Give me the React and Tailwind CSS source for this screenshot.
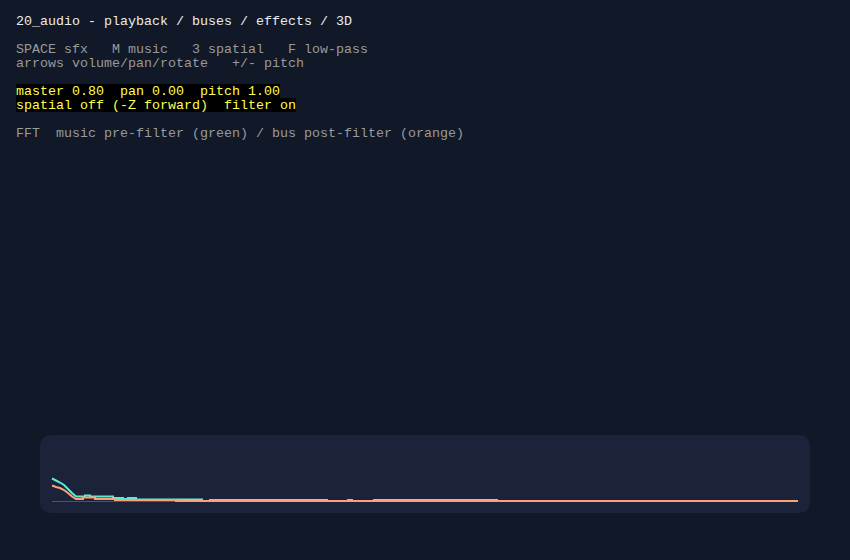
import React from 'react';

const green = [
  [52, 478.5], [56, 480.5], [60, 482.5], [64, 485], [68, 489], [72, 493], [76, 496.5],
  [85, 496.5], [85, 495.5], [90, 495.5], [90, 496.5], [113, 496.5], [113, 498], [123, 498],
  [123, 499], [128, 499], [128, 498], [136, 498], [136, 499.5], [203, 499.5],
];

const greenSegs = [
  [209, 328], [347, 353], [373, 498],
];

const orange = [
  [52, 485.5], [56, 487], [60, 488], [64, 490], [68, 493], [72, 496.5], [76, 499],
  [83, 499], [83, 497.5], [95, 497.5], [95, 499], [115, 499], [115, 500], [176, 500],
  [176, 501], [798, 501],
];

const Spectrum = () => (
  <svg className="block w-full h-full" viewBox="40 435 770 78" preserveAspectRatio="none">
    <line x1="52" y1="501.5" x2="176" y2="501.5" stroke="#4b5568" strokeWidth="1" />
    <polyline points={green.map((p) => p.join(',')).join(' ')} fill="none" stroke="#5eead4" strokeWidth="2" />
    {greenSegs.map(([a, b]) => (
      <line key={a} x1={a} y1="499.5" x2={b} y2="499.5" stroke="#5eead4" strokeWidth="1" />
    ))}
    <polyline points={orange.map((p) => p.join(',')).join(' ')} fill="none" stroke="#fda172" strokeWidth="2" />
  </svg>
);

export default function App() {
  return (
    <div
      className="h-[560px] w-[850px] bg-[#111827] flex flex-col overflow-hidden"
      style={{ fontFamily: '"Liberation Mono", "DejaVu Sans Mono", monospace' }}
    >
      {/* text lines sit 1px low inside 14px rows */}
      <div className="pt-[14px] px-[16px] text-[13.33px] leading-[16px] whitespace-pre">
        <div className="h-[14px] text-[#ececec]">20_audio - playback / buses / effects / 3D</div>
        <div className="h-[14px]" />
        <div className="h-[14px] text-[#9a9a9a]">SPACE sfx   M music   3 spatial   F low-pass</div>
        <div className="h-[14px] text-[#9a9a9a]">arrows volume/pan/rotate   +/- pitch</div>
        <div className="h-[14px]" />
        <div className="h-[14px] w-fit bg-black text-[#ffff50]">master 0.80  pan 0.00  pitch 1.00</div>
        <div className="h-[14px] w-fit bg-black text-[#ffff50]">spatial off (-Z forward)  filter on</div>
        <div className="h-[14px]" />
        <div className="h-[14px] text-[#9a9a9a]">FFT  music pre-filter (green) / bus post-filter (orange)</div>
      </div>

      <div className="mt-auto mb-[47px] mx-[40px] h-[78px] rounded-[10px] bg-[#1a2339] overflow-hidden">
        <Spectrum />
      </div>
    </div>
  );
}
